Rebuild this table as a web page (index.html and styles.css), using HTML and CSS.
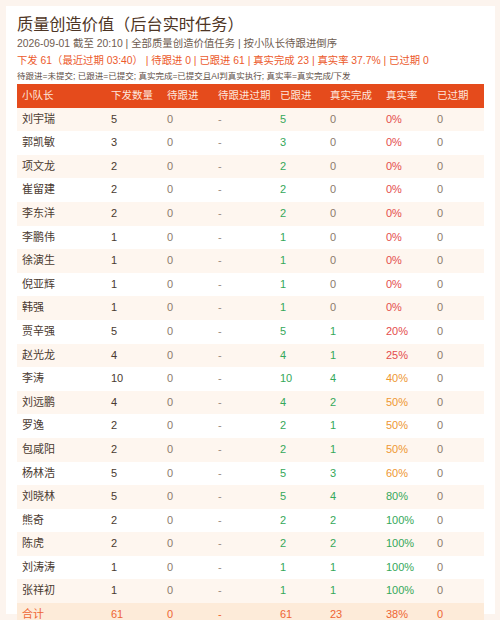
FILE: index.html
```html
<!DOCTYPE html>
<html lang="zh-CN">
<head>
    <meta charset="UTF-8">
    <meta name="viewport" content="width=device-width, initial-scale=1.0">
    <title>质量创造价值（后台实时任务）</title>
    <link rel="stylesheet" href="styles.css">
</head>
<body>
    <div class="card">
        <h1 class="title">质量创造价值（后台实时任务）</h1>
        <div class="subtitle">2026-09-01 截至 20:10 | 全部质量创造价值任务 | 按小队长待跟进倒序</div>
        <div class="summary">下发 61（最近过期 03:40） | 待跟进 0 | 已跟进 61 | 真实完成 23 | 真实率 37.7% | 已过期 0</div>
        <div class="note">待跟进=未提交; 已跟进=已提交; 真实完成=已提交且AI判真实执行; 真实率=真实完成/下发</div>
        <table class="report">
            <colgroup>
                <col style="width:89px"><col style="width:56px"><col style="width:51px"><col style="width:62px">
                <col style="width:50px"><col style="width:56px"><col style="width:51px"><col style="width:52px">
            </colgroup>
            <thead>
                <tr>
                    <th>小队长</th><th>下发数量</th><th>待跟进</th><th>待跟进过期</th>
                    <th>已跟进</th><th>真实完成</th><th>真实率</th><th>已过期</th>
                </tr>
            </thead>
            <tbody id="rows"></tbody>
            <tfoot>
                <tr>
                    <td>合计</td><td>61</td><td>0</td><td>-</td><td>61</td><td>23</td><td>38%</td><td>0</td>
                </tr>
            </tfoot>
        </table>
    </div>
    <script>
        // 小队长, 下发, 已跟进, 真实完成
        var data = [
            ["刘宇瑞", 5, 5, 0], ["郭凯敏", 3, 3, 0], ["项文龙", 2, 2, 0], ["崔留建", 2, 2, 0],
            ["李东洋", 2, 2, 0], ["李鹏伟", 1, 1, 0], ["徐演生", 1, 1, 0], ["倪亚辉", 1, 1, 0],
            ["韩强", 1, 1, 0], ["贾辛强", 5, 5, 1], ["赵光龙", 4, 4, 1], ["李涛", 10, 10, 4],
            ["刘远鹏", 4, 4, 2], ["罗逸", 2, 2, 1], ["包咸阳", 2, 2, 1], ["杨林浩", 5, 5, 3],
            ["刘晓林", 5, 5, 4], ["熊奇", 2, 2, 2], ["陈虎", 2, 2, 2], ["刘涛涛", 1, 1, 1],
            ["张祥初", 1, 1, 1]
        ];
        var html = "";
        data.forEach(function (r) {
            var rate = Math.round(r[3] / r[1] * 100);
            var rateClass = rate < 30 ? "bad" : (rate < 70 ? "mid" : "good");
            html += "<tr>" +
                "<td class='name'>" + r[0] + "</td>" +
                "<td>" + r[1] + "</td>" +
                "<td class='muted'>0</td>" +
                "<td class='dash'>-</td>" +
                "<td class='good'>" + r[2] + "</td>" +
                "<td class='" + (r[3] > 0 ? "good" : "muted") + "'>" + r[3] + "</td>" +
                "<td class='" + rateClass + "'>" + rate + "%</td>" +
                "<td class='muted'>0</td>" +
                "</tr>";
        });
        document.getElementById("rows").innerHTML = html;
    </script>
</body>
</html>
```

FILE: styles.css
```css
html, body {
    margin: 0;
    padding: 0;
    background: #fcf4ee;
}
body {
    font-family: "Liberation Sans", "Noto Sans CJK SC", sans-serif;
    padding: 6px 5px 6px 6px;
}
.card {
    background: #fff;
    height: 608px;
    box-sizing: border-box;
    padding: 7px 11px 0 11px;
}
.title {
    margin: 0;
    font-size: 16.2px;
    font-weight: normal;
    line-height: 22px;
    color: #4e3525;
}
.subtitle {
    margin-top: 1px;
    font-size: 10.4px;
    line-height: 16px;
    color: #6e5c50;
}
.summary {
    font-size: 10.35px;
    line-height: 18px;
    color: #ec5a2c;
}
.note {
    font-size: 8.5px;
    line-height: 12px;
    color: #5e5048;
}
.report {
    margin-top: 2px;
    width: 467px;
    table-layout: fixed;
    border-collapse: collapse;
    font-size: 11px;
}
.report th,
.report td {
    text-align: left;
    padding: 5px 5px;
    line-height: 13.6px;
    white-space: nowrap;
}
.report th {
    background: #e54b1c;
    color: #fde6dc;
    font-weight: normal;
    font-size: 10.5px;
}
.report td {
    color: #4a3a30;
}
.report tbody tr:nth-child(odd) {
    background: #fef6ef;
}
.report td.muted {
    color: #8c7a6c;
}
.report td.dash {
    color: #9a8a80;
}
.report td.good {
    color: #35a85a;
}
.report td.mid {
    color: #ee9632;
}
.report td.bad {
    color: #e44c4c;
}
.report tfoot tr {
    background: #fdebd9;
}
.report tfoot td {
    color: #ee6533;
}
```
